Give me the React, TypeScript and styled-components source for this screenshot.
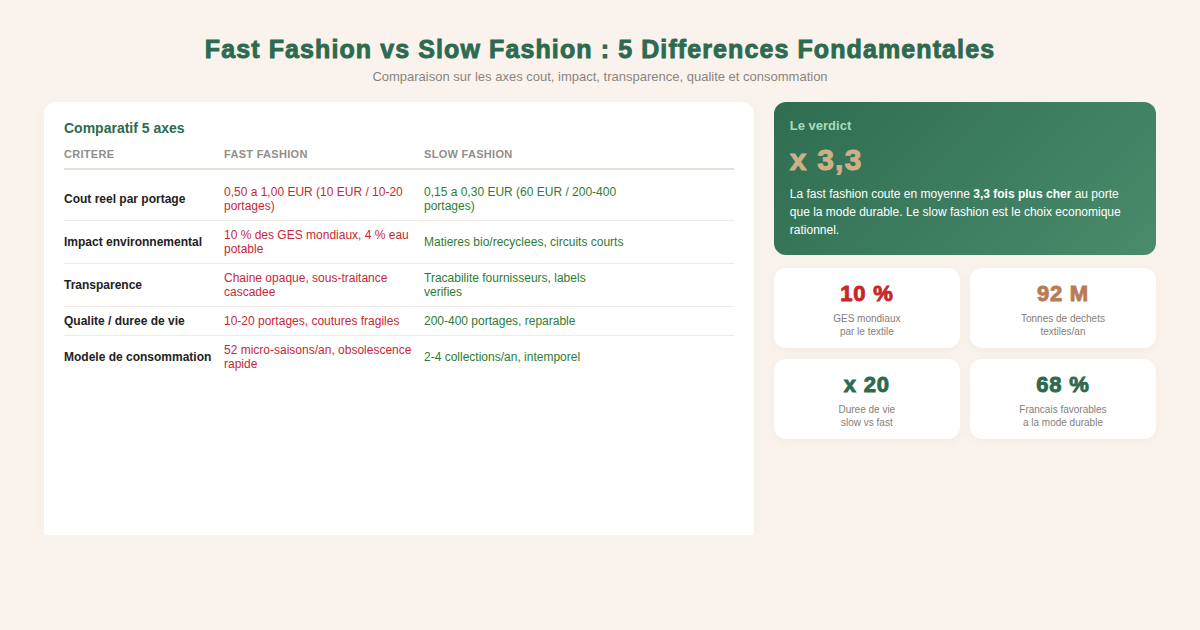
import React from "react";
import styled, { createGlobalStyle } from "styled-components";

type Row = { critere: string; fast: string; slow: string };
type Stat = { value: string; tone: "red" | "brown" | "green"; label: [string, string] };

const rows: Row[] = [
  { critere: "Cout reel par portage", fast: "0,50 a 1,00 EUR (10 EUR / 10-20 portages)", slow: "0,15 a 0,30 EUR (60 EUR / 200-400 portages)" },
  { critere: "Impact environnemental", fast: "10 % des GES mondiaux, 4 % eau potable", slow: "Matieres bio/recyclees, circuits courts" },
  { critere: "Transparence", fast: "Chaine opaque, sous-traitance cascadee", slow: "Tracabilite fournisseurs, labels verifies" },
  { critere: "Qualite / duree de vie", fast: "10-20 portages, coutures fragiles", slow: "200-400 portages, reparable" },
  { critere: "Modele de consommation", fast: "52 micro-saisons/an, obsolescence rapide", slow: "2-4 collections/an, intemporel" },
];

const stats: Stat[] = [
  { value: "10 %", tone: "red", label: ["GES mondiaux", "par le textile"] },
  { value: "92 M", tone: "brown", label: ["Tonnes de dechets", "textiles/an"] },
  { value: "x 20", tone: "green", label: ["Duree de vie", "slow vs fast"] },
  { value: "68 %", tone: "green", label: ["Francais favorables", "a la mode durable"] },
];

const toneColors = { red: "#c62828", brown: "#b97a56", green: "#2d6a4f" };

const App = () => {
  return (
    <>
      <GlobalStyle />
      <Viewport>
        <Page>
          <Header>
            <Title>Fast Fashion vs Slow Fashion : 5 Differences Fondamentales</Title>
            <Subtitle>Comparaison sur les axes cout, impact, transparence, qualite et consommation</Subtitle>
          </Header>
          <Main>
            <TableCard>
              <CardTitle>Comparatif 5 axes</CardTitle>
              <HeadRow>
                <HeadCell>Critere</HeadCell>
                <HeadCell>Fast fashion</HeadCell>
                <HeadCell>Slow fashion</HeadCell>
              </HeadRow>
              <Body>
                {rows.map((r) => (
                  <BodyRow key={r.critere}>
                    <Critere>{r.critere}</Critere>
                    <Value $side="fast">{r.fast}</Value>
                    <Value $side="slow">{r.slow}</Value>
                  </BodyRow>
                ))}
              </Body>
            </TableCard>
            <Side>
              <Verdict>
                <VerdictLabel>Le verdict</VerdictLabel>
                <VerdictFigure>x 3,3</VerdictFigure>
                <VerdictText>
                  La fast fashion coute en moyenne <strong>3,3 fois plus cher</strong> au porte que la mode
                  durable. Le slow fashion est le choix economique rationnel.
                </VerdictText>
              </Verdict>
              <StatGrid>
                {stats.map((s) => (
                  <StatCard key={s.value}>
                    <StatValue $tone={s.tone}>{s.value}</StatValue>
                    <StatLabel>
                      {s.label[0]}
                      <br />
                      {s.label[1]}
                    </StatLabel>
                  </StatCard>
                ))}
              </StatGrid>
            </Side>
          </Main>
        </Page>
      </Viewport>
    </>
  );
};

const GlobalStyle = createGlobalStyle`
  html, body {
    margin: 0;
    background: #faf3ed;
  }
  body {
    font-family: "Liberation Sans", Arial, sans-serif;
    color: #222;
  }
`;

const arrow = "#8b8b8b";
const track = "#fafafa";

/** fenetre defilante, barres classiques */
const Viewport = styled.div`
  width: 1185px;
  height: 535px;
  overflow: scroll;
  background: #faf3ed;

  &::-webkit-scrollbar {
    width: 15px;
    height: 15px;
    background: ${track};
  }
  &::-webkit-scrollbar-track {
    background: ${track};
  }
  &::-webkit-scrollbar-corner {
    background: ${track};
  }
  &::-webkit-scrollbar-thumb {
    background-color: ${arrow};
    background-clip: padding-box;
    border: 3px solid transparent;
    border-radius: 8px;
  }
  &::-webkit-scrollbar-button {
    display: block;
    width: 15px;
    height: 15px;
    background-color: ${track};
    background-repeat: no-repeat;
    background-position: center;
  }
  &::-webkit-scrollbar-button:start:increment,
  &::-webkit-scrollbar-button:end:decrement {
    display: none;
  }
  &::-webkit-scrollbar-button:vertical:start:decrement {
    background-image: conic-gradient(from 145deg at 50% 0, ${arrow} 70deg, transparent 0);
    background-size: 7px 5px;
  }
  &::-webkit-scrollbar-button:vertical:end:increment {
    background-image: conic-gradient(from -35deg at 50% 100%, ${arrow} 70deg, transparent 0);
    background-size: 7px 5px;
  }
  &::-webkit-scrollbar-button:horizontal:start:decrement {
    background-image: conic-gradient(from 235deg at 100% 50%, ${arrow} 70deg, transparent 0);
    background-size: 5px 7px;
  }
  &::-webkit-scrollbar-button:horizontal:end:increment {
    background-image: conic-gradient(from 55deg at 0 50%, ${arrow} 70deg, transparent 0);
    background-size: 5px 7px;
  }
`;

const Page = styled.div`
  box-sizing: border-box;
  width: 1200px;
  min-height: 642px;
  padding: 34px 44px 40px;
  display: flex;
  flex-direction: column;
`;

const Header = styled.header`
  text-align: center;
  margin-bottom: 17px;
`;

const Title = styled.h1`
  margin: 0;
  font-size: 25px;
  line-height: 30px;
  font-weight: 900;
  letter-spacing: 1.1px;
  color: #2d6a4f;
  -webkit-text-stroke: 0.9px #2d6a4f;
`;

const Subtitle = styled.p`
  margin: 5px 0 0;
  font-size: 13px;
  line-height: 16px;
  color: #8a8580;
`;

const Main = styled.main`
  flex: 1;
  display: grid;
  grid-template-columns: 13fr 7fr;
  gap: 20px;
`;

/** carte du tableau */
const TableCard = styled.section`
  background: #fff;
  border-radius: 12px;
  padding: 18px 20px;
  box-shadow: 0 2px 10px rgba(120, 90, 60, 0.05);
`;

const CardTitle = styled.h2`
  margin: 0 0 6px;
  font-size: 14px;
  line-height: 16px;
  font-weight: 700;
  color: #2d6a4f;
`;

const columns = "160px 200px 210px 1fr";

const HeadRow = styled.div`
  display: grid;
  grid-template-columns: ${columns};
  border-bottom: 2px solid #e4dfd7;
`;

const HeadCell = styled.div`
  padding: 6px 8px 7px 0;
  font-size: 11px;
  line-height: 13px;
  font-weight: 700;
  letter-spacing: 0.3px;
  text-transform: uppercase;
  color: #938e88;
`;

const Body = styled.div`
  padding-top: 8px;
`;

const BodyRow = styled.div`
  display: grid;
  grid-template-columns: ${columns};
  align-items: center;
  padding: 7px 0;
  border-bottom: 1px solid #f1ece6;

  &:last-child {
    border-bottom: none;
  }
`;

const Critere = styled.div`
  padding-right: 8px;
  font-size: 12px;
  line-height: 14px;
  font-weight: 700;
  color: #222;
`;

const Value = styled.div<{ $side: "fast" | "slow" }>`
  padding-right: 8px;
  font-size: 12px;
  line-height: 14px;
  color: ${({ $side }) => ($side === "fast" ? "#c62839" : "#2e7d32")};
`;

/** colonne de droite */
const Side = styled.aside`
  display: flex;
  flex-direction: column;
  gap: 13px;
  align-self: start;
`;

const Verdict = styled.div`
  padding: 16px;
  border-radius: 12px;
  color: #fff;
  background: linear-gradient(135deg, #2f6d51 0%, #4a8b6c 100%);
`;

const VerdictLabel = styled.div`
  font-size: 13px;
  line-height: 16px;
  font-weight: 700;
  color: #a9dcbb;
`;

const VerdictFigure = styled.div`
  margin-top: 10px;
  font-size: 30px;
  line-height: 32px;
  font-weight: 900;
  letter-spacing: 1.2px;
  color: #cdb087;
  -webkit-text-stroke: 1px #cdb087;
`;

const VerdictText = styled.p`
  margin: 9px 0 0;
  font-size: 12px;
  line-height: 18px;

  strong {
    font-weight: 700;
  }
`;

const StatGrid = styled.div`
  display: grid;
  grid-template-columns: 1fr 1fr;
  column-gap: 10px;
  row-gap: 11px;
`;

const StatCard = styled.div`
  padding: 14px 10px 10px;
  border-radius: 12px;
  background: #fff;
  text-align: center;
  box-shadow: 0 2px 8px rgba(120, 90, 60, 0.06);
`;

const StatValue = styled.div<{ $tone: Stat["tone"] }>`
  font-size: 22px;
  line-height: 24px;
  font-weight: 900;
  letter-spacing: 0.8px;
  color: ${({ $tone }) => toneColors[$tone]};
  -webkit-text-stroke: 0.9px ${({ $tone }) => toneColors[$tone]};
`;

const StatLabel = styled.div`
  margin-top: 6px;
  font-size: 10px;
  line-height: 13px;
  color: #858079;
`;

export default App;
